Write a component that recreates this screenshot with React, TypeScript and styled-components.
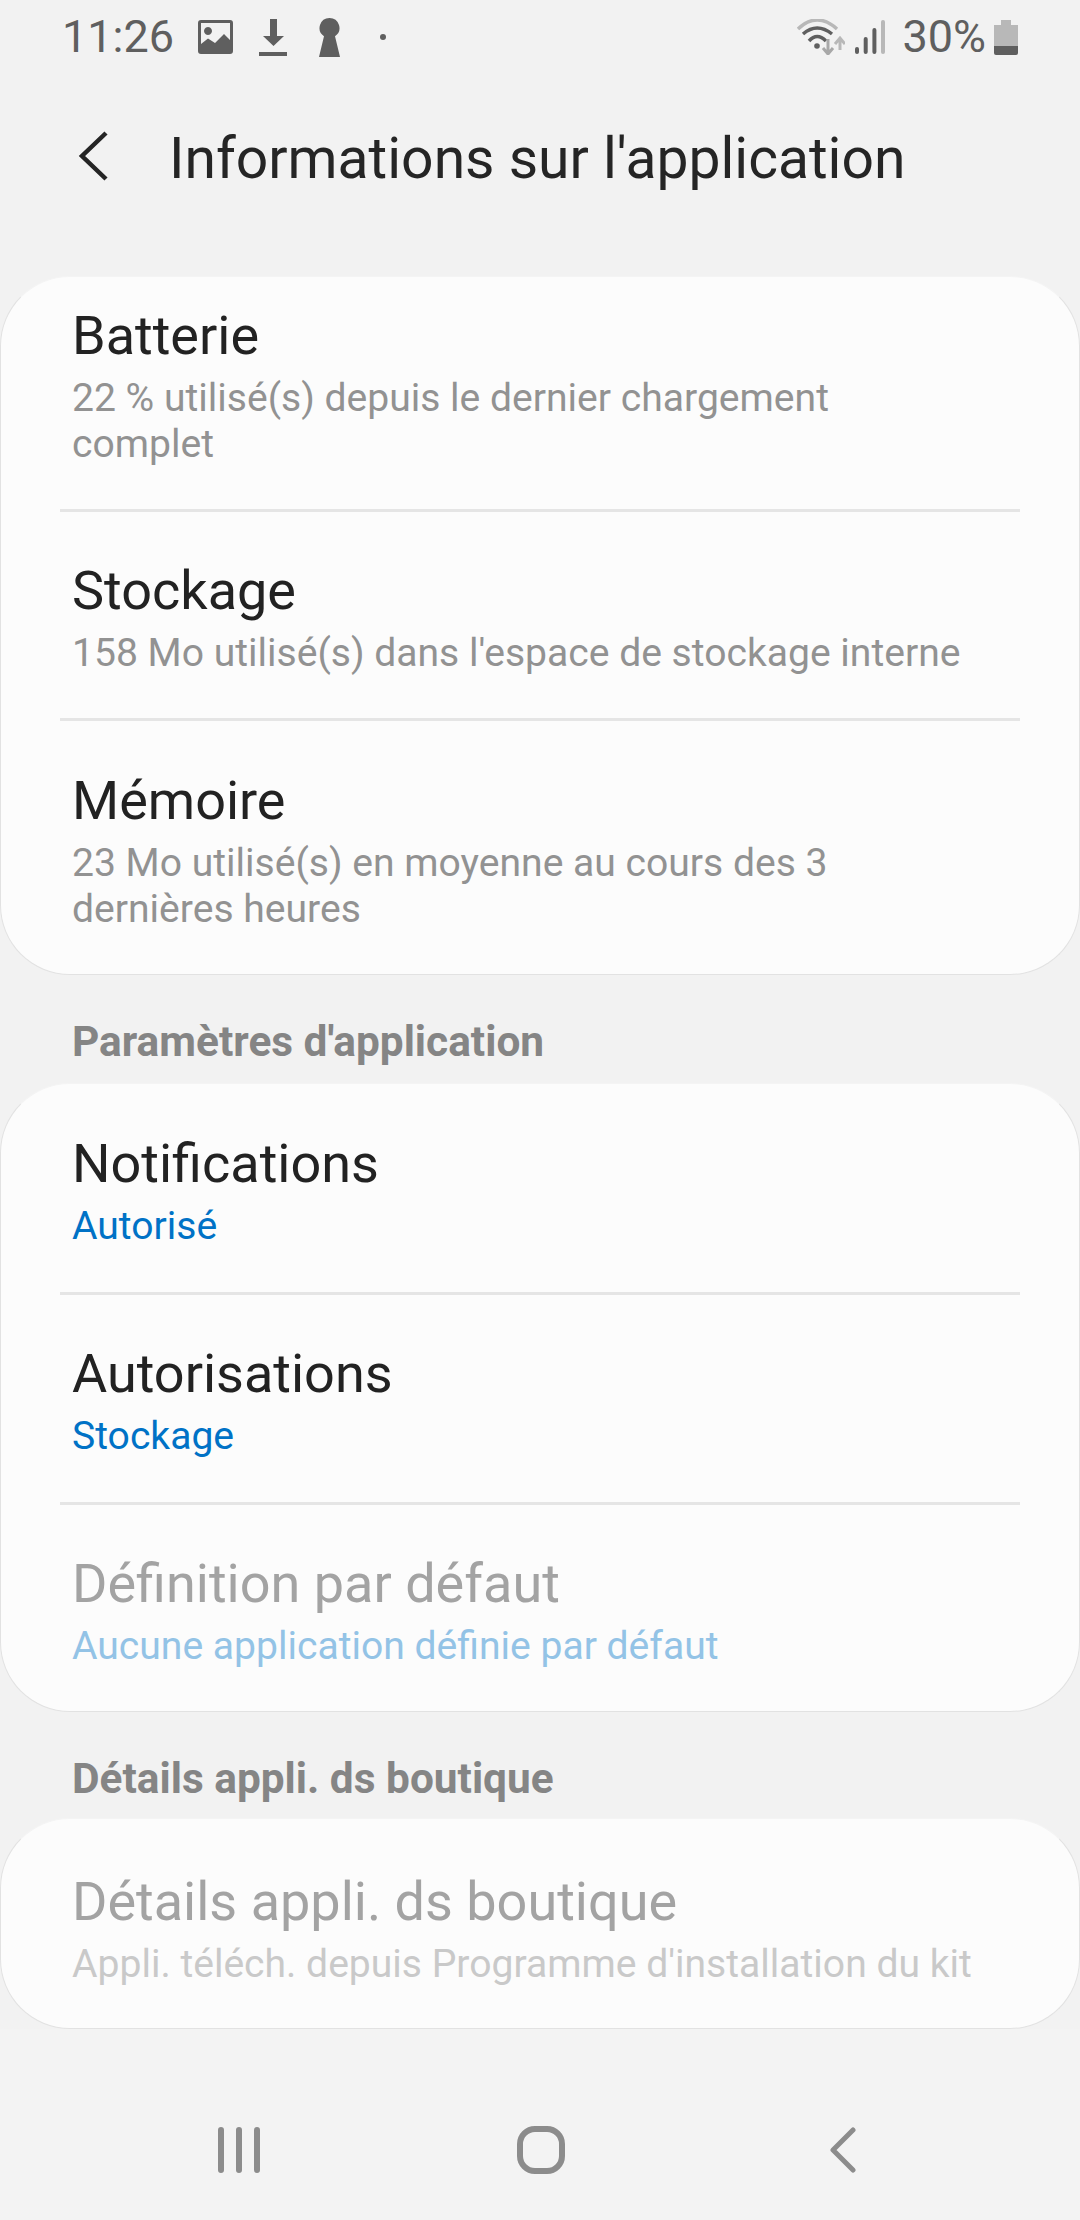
import React from "react";
import styled, { createGlobalStyle } from "styled-components";

const GlobalStyle = createGlobalStyle`
  html, body {
    margin: 0;
    padding: 0;
    background: #f2f2f2;
    font-family: Roboto, "Noto Sans", sans-serif;
  }
`

const Screen = styled.div`
  width: 1080px;
  height: 2220px;
  background: #f2f2f2;
  display: flex;
  flex-direction: column;
  overflow: hidden;
`

const StatusBar = styled.div`
  height: 74px;
  display: flex;
  align-items: center;
  justify-content: space-between;
  padding: 0 62px 0 62px;
  box-sizing: border-box;
  color: #5f5f5f;
`

const StatusGroup = styled.div`
  display: flex;
  align-items: center;
`

const StatusText = styled.span<{ $battery?: boolean }>`
  font-size: 45px;
  line-height: 74px;
  margin-left: ${p => (p.$battery ? "17px" : "0")};
`

const Header = styled.div`
  height: 202px;
  box-sizing: border-box;
  padding: 0 0 38px 78px;
  display: flex;
  align-items: center;
`

const HeaderTitle = styled.h1`
  margin: 4px 0 0 61px;
  font-size: 57px;
  font-weight: 400;
  color: #252525;
`

const Card = styled.div<{ $height: number }>`
  height: ${p => p.$height}px;
  box-sizing: border-box;
  background: #fcfcfc;
  border-radius: 70px;
  border: 1px solid #e2e2e2;
  border-top-color: #f4f4f4;
  overflow: hidden;
  padding: 0 59px;
`

const Row = styled.div<{ $height: number; $divider?: boolean; $clipped?: boolean }>`
  height: ${p => p.$height}px;
  box-sizing: border-box;
  padding: ${p => (p.$clipped ? "0 0 14px 12px" : "6px 0 0 12px")};
  border-bottom: ${p => (p.$divider ? "3px solid #e5e5e5" : "none")};
  display: flex;
  flex-direction: column;
  justify-content: center;
`

const RowTitle = styled.div<{ $disabled?: boolean }>`
  font-size: 54px;
  line-height: 60px;
  color: ${p => (p.$disabled ? "#a3a3a3" : "#222222")};
`

const RowSub = styled.div<{ $tone?: "blue" | "paleBlue" | "pale" }>`
  font-size: 39.1px;
  line-height: 46px;
  margin-top: 9px;
  white-space: pre-line;
  color: ${p =>
    p.$tone === "blue" ? "#0072c6" :
    p.$tone === "paleBlue" ? "#93c3e6" :
    p.$tone === "pale" ? "#c9c9c9" : "#929292"};
`

const SectionLabel = styled.div<{ $height: number }>`
  height: ${p => p.$height}px;
  box-sizing: border-box;
  padding: 44px 0 0 72px;
  font-size: 42.4px;
  line-height: 46px;
  font-weight: 700;
  color: #858585;
`

const NavBar = styled.div`
  flex: 1;
  padding: 51px 224px 0 218px;
  display: flex;
  align-items: center;
  justify-content: space-between;
  background: #f3f3f3;
`

const GalleryIcon = () => <svg width="35" height="34" viewBox="0 0 35 34" style={{ marginLeft: 24 }}>
  <path fillRule="evenodd" fill="#5f5f5f" d="M3 0H32Q35 0 35 3V31Q35 34 32 34H3Q0 34 0 31V3Q0 0 3 0ZM3 3V24L10 18.5L17 23L26 14L32 20V3ZM10 7a4 4 0 1 0 .01 0Z" />
</svg>

const DownloadIcon = () => <svg width="28" height="37" viewBox="0 0 28 37" style={{ marginLeft: 26 }}>
  <path fill="#5f5f5f" d="M11 0H18V17H25L14.5 27L4 17H11Z" />
  <rect x="0" y="33" width="28" height="4" fill="#5f5f5f" />
</svg>

const KeyholeIcon = () => <svg width="21" height="39" viewBox="0 0 21 39" style={{ marginLeft: 32 }}>
  <path fill="#5f5f5f" d="M10.5 0a10 10 0 0 1 5.5 18.3L21 39H0L5 18.3A10 10 0 0 1 10.5 0Z" />
</svg>

const DotIcon = () => <svg width="8" height="8" viewBox="0 0 8 8" style={{ marginLeft: 39 }}>
  <circle cx="4" cy="4" r="3" fill="#5f5f5f" />
</svg>

const WifiIcon = () => <svg width="48" height="36" viewBox="0 0 48 36">
  <path d="M1 10Q20 -8 40 10" fill="none" stroke="#b8b8b8" strokeWidth="3.5" />
  <path d="M6 15Q20 3 35 15" fill="none" stroke="#5f5f5f" strokeWidth="3.5" />
  <path d="M12 22Q20 13 29 22" fill="none" stroke="#5f5f5f" strokeWidth="3.5" />
  <circle cx="20" cy="27" r="2.8" fill="#5f5f5f" />
  <path d="M31 20V35M26 29L31 35L36 29" fill="none" stroke="#a8a8a8" strokeWidth="3" />
  <path d="M43 31V19M38 25L43 19L48 25" fill="none" stroke="#b8b8b8" strokeWidth="3" />
</svg>

const SignalIcon = () => <svg width="30" height="34" viewBox="0 0 30 34" style={{ marginLeft: 10 }}>
  <rect x="0" y="27" width="4" height="7" rx="2" fill="#5f5f5f" />
  <rect x="8.7" y="17" width="4" height="17" rx="2" fill="#5f5f5f" />
  <rect x="17.4" y="8" width="4" height="26" rx="2" fill="#5f5f5f" />
  <rect x="26" y="0" width="4" height="34" rx="2" fill="#b8b8b8" />
</svg>

const BatteryIcon = () => <svg width="24" height="35" viewBox="0 0 24 35" style={{ marginLeft: 8 }}>
  <path fill="#b8b8b8" d="M7 0H17V5H24V26H0V5H7Z" />
  <path fill="#5f5f5f" d="M0 26H24V33Q24 35 22 35H2Q0 35 0 33Z" />
</svg>

const BackIcon = () => <svg width="30" height="50" viewBox="0 0 30 50">
  <path d="M28 2L4 25L28 48" fill="none" stroke="#252525" strokeWidth="4.5" />
</svg>

const RecentsIcon = () => <svg width="42" height="46" viewBox="0 0 42 46">
  <path d="M3 3V43M21 3V43M39 3V43" fill="none" stroke="#8c8c8c" strokeWidth="6" strokeLinecap="round" />
</svg>

const HomeIcon = () => <svg width="48" height="48" viewBox="0 0 48 48">
  <rect x="3" y="3" width="42" height="42" rx="15" fill="none" stroke="#8c8c8c" strokeWidth="6" />
</svg>

const NavBackIcon = () => <svg width="34" height="46" viewBox="0 0 34 46">
  <path d="M31 3L11 23L31 43" fill="none" stroke="#8c8c8c" strokeWidth="5" strokeLinecap="round" strokeLinejoin="round" />
</svg>

const App: React.FC = () => {
  return (
    <Screen>
      <GlobalStyle />
      <StatusBar>
        <StatusGroup>
          <StatusText>11:26</StatusText>
          <GalleryIcon />
          <DownloadIcon />
          <KeyholeIcon />
          <DotIcon />
        </StatusGroup>
        <StatusGroup>
          <WifiIcon />
          <SignalIcon />
          <StatusText $battery>30%</StatusText>
          <BatteryIcon />
        </StatusGroup>
      </StatusBar>
      <Header>
        <BackIcon />
        <HeaderTitle>Informations sur l'application</HeaderTitle>
      </Header>
      <Card $height={699}>
        <Row $height={235} $divider $clipped>
          <RowTitle>Batterie</RowTitle>
          <RowSub>{"22 % utilisé(s) depuis le dernier chargement\ncomplet"}</RowSub>
        </Row>
        <Row $height={209} $divider>
          <RowTitle>Stockage</RowTitle>
          <RowSub>158 Mo utilisé(s) dans l'espace de stockage interne</RowSub>
        </Row>
        <Row $height={255}>
          <RowTitle>Mémoire</RowTitle>
          <RowSub>{"23 Mo utilisé(s) en moyenne au cours des 3\ndernières heures"}</RowSub>
        </Row>
      </Card>
      <SectionLabel $height={108}>Paramètres d'application</SectionLabel>
      <Card $height={629}>
        <Row $height={211} $divider>
          <RowTitle>Notifications</RowTitle>
          <RowSub $tone="blue">Autorisé</RowSub>
        </Row>
        <Row $height={210} $divider>
          <RowTitle>Autorisations</RowTitle>
          <RowSub $tone="blue">Stockage</RowSub>
        </Row>
        <Row $height={207}>
          <RowTitle $disabled>Définition par défaut</RowTitle>
          <RowSub $tone="paleBlue">Aucune application définie par défaut</RowSub>
        </Row>
      </Card>
      <SectionLabel $height={106}>Détails appli. ds boutique</SectionLabel>
      <Card $height={211}>
        <Row $height={215}>
          <RowTitle $disabled>Détails appli. ds boutique</RowTitle>
          <RowSub $tone="pale">Appli. téléch. depuis Programme d'installation du kit</RowSub>
        </Row>
      </Card>
      <NavBar>
        <RecentsIcon />
        <HomeIcon />
        <NavBackIcon />
      </NavBar>
    </Screen>
  )
}

export default App;
